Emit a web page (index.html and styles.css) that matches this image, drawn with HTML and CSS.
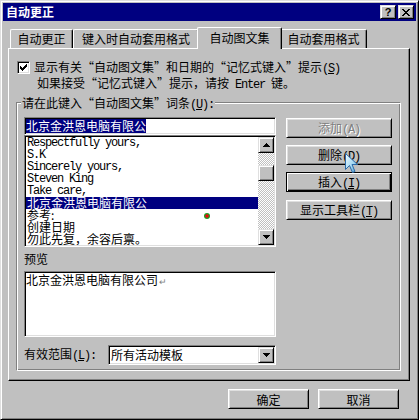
FILE: index.html
```html
<!doctype html>
<html lang="zh-CN">
<head>
  <meta charset="UTF-8">
  <title>自动更正</title>
  <link rel="stylesheet" href="styles.css">
</head>
<body>
  <div class="window">

    <div class="titlebar">
      <span class="title">自动更正</span>
      <div class="title-buttons">
        <span class="tbtn">?</span>
        <span class="tbtn">
          <svg width="8" height="7" viewBox="0 0 8 7"><path d="M0 0h2v1h-2zM6 0h2v1h-2zM1 1h2v1h-2zM5 1h2v1h-2zM2 2h4v1h-4zM3 3h2v1h-2zM2 4h4v1h-4zM1 5h2v1h-2zM5 5h2v1h-2zM0 6h2v1h-2zM6 6h2v1h-2z"/></svg>
        </span>
      </div>
    </div>

    <div class="tabs">
      <div class="tab tab-correct">自动更正</div>
      <div class="tab tab-typing">键入时自动套用格式</div>
      <div class="tab tab-text active">自动图文集</div>
      <div class="tab tab-format">自动套用格式</div>
    </div>

    <div class="panel">
      <div class="option">
        <span class="checkbox">
          <svg width="7" height="7" viewBox="0 0 7 7"><path d="M6 0h1v1h-1zM5 1h2v1h-2zM0 2h1v1h-1zM4 2h3v1h-3zM0 3h2v1h-2zM3 3h3v1h-3zM0 4h5v1h-5zM1 5h3v1h-3zM2 6h1v1h-1z"/></svg>
        </span>
        <div class="option-text">
          <div>显示有关“自动图文集”和日期的“记忆式键入”提示<span class="en">(<u>S</u>)</span></div>
          <div class="hint">如果接受“记忆式键入”提示，请按<span class="en"> Enter </span>键。</div>
        </div>
      </div>

      <div class="group">
        <div class="group-label">请在此键入“自动图文集”词条<span class="en">(<u>U</u>):</span></div>
        <div class="group-body">

          <div class="entry-col">
            <div class="field textbox"><span class="sel">北京金洪恩电脑有限公</span></div>

            <div class="field listbox">
              <ul class="items">
                <li class="en">Respectfully yours,</li>
                <li class="en">S.K</li>
                <li class="en">Sincerely yours,</li>
                <li class="en">Steven King</li>
                <li class="en">Take care,</li>
                <li class="selected">北京金洪恩电脑有限公</li>
                <li>参考:<span class="dot"></span></li>
                <li>创建日期</li>
                <li>勿此先复，余容后禀。</li>
              </ul>
              <div class="scrollbar">
                <span class="raised sb-btn">
                  <svg width="7" height="4" viewBox="0 0 7 4"><path d="M3 0h1v1h-1zM2 1h3v1h-3zM1 2h5v1h-5zM0 3h7v1h-7z"/></svg>
                </span>
                <span class="track track-top"></span>
                <span class="raised sb-thumb"></span>
                <span class="track track-rest"></span>
                <span class="raised sb-btn">
                  <svg width="7" height="4" viewBox="0 0 7 4"><path d="M0 0h7v1h-7zM1 1h5v1h-5zM2 2h3v1h-3zM3 3h1v1h-1z"/></svg>
                </span>
              </div>
            </div>

            <div class="label">预览</div>
            <div class="field preview">北京金洪恩电脑有限公司<span class="para">↵</span></div>

            <div class="scope">
              <span>有效范围<span class="en">(<u>L</u>):</span></span>
              <div class="field combo">
                <span class="combo-text">所有活动模板</span>
                <span class="raised sb-btn">
                  <svg width="7" height="4" viewBox="0 0 7 4"><path d="M0 0h7v1h-7zM1 1h5v1h-5zM2 2h3v1h-3zM3 3h1v1h-1z"/></svg>
                </span>
              </div>
            </div>
          </div>

          <div class="actions">
            <button class="btn" disabled>添加<span class="en">(A)</span></button>
            <button class="btn">删除<span class="en">(<u>D</u>)</span></button>
            <button class="btn default">插入<span class="en">(<u>I</u>)</span></button>
            <button class="btn">显示工具栏<span class="en">(<u>T</u>)</span></button>

            <svg class="cursor" width="14" height="21" viewBox="0 0 14 21">
              <defs>
                <linearGradient id="cur" x1="0" y1="0" x2="1" y2="1">
                  <stop offset="0" stop-color="#f4fcff"/>
                  <stop offset="0.6" stop-color="#9fd6f2"/>
                  <stop offset="1" stop-color="#3d8fc9"/>
                </linearGradient>
              </defs>
              <path d="M0.5 0.5V16.5L4.5 12.5L7.5 19.5L10 18.5L7 11.5H12.5Z" fill="url(#cur)" stroke="#2b6aa8" stroke-width="1"/>
            </svg>
          </div>

        </div>
      </div>
    </div>

    <div class="footer">
      <button class="btn btn-wide">确定</button>
      <button class="btn btn-wide">取消</button>
    </div>

  </div>
</body>
</html>
```

FILE: styles.css
```css
* {
  box-sizing: border-box;
}

body {
  margin: 0;
  background: #c0c0c0;
  font-family: "Noto Sans CJK SC", sans-serif;
  font-size: 12px;
  line-height: 14px;
  color: #000;
}

/* half-width latin, close to the dialog font */
.en {
  font-family: "Liberation Mono", monospace;
  font-size: 12px;
  letter-spacing: -1.2px;
}

u {
  text-decoration: underline;
}

/* Window frame */
.window {
  width: 419px;
  height: 420px;
  border: 1px solid;
  border-color: #dfdfdf #000 #000 #dfdfdf;
  box-shadow: inset 1px 1px 0 #fff, inset -1px -1px 0 #808080;
  padding: 2px;
}

/* Title bar */
.titlebar {
  height: 18px;
  background: #000080;
  display: flex;
  align-items: center;
  justify-content: space-between;
  padding: 0 2px 0 3px;
}

.title {
  color: #fff;
  font-weight: bold;
}

.title-buttons {
  display: flex;
  gap: 2px;
}

.tbtn,
.raised {
  border: 1px solid;
  border-color: #dfdfdf #000 #000 #dfdfdf;
  box-shadow: inset 1px 1px 0 #fff, inset -1px -1px 0 #808080;
  background: #c0c0c0;
}

.tbtn {
  width: 16px;
  height: 14px;
  display: flex;
  align-items: center;
  justify-content: center;
  font: bold 11px "Liberation Sans", sans-serif;
}

/* Tabs */
.tabs {
  display: flex;
  align-items: flex-end;
  height: 21px;
  margin: 6px 0 0 7px;
}

.tab {
  height: 19px;
  border: 1px solid;
  border-bottom: none;
  border-color: #fff #000 #000 #fff;
  border-radius: 2px 2px 0 0;
  box-shadow: inset -1px 0 0 #808080;
  text-align: center;
  line-height: 18px;
  background: #c0c0c0;
}

.tab-correct { width: 63px; }
.tab-typing { width: 126px; }
.tab-text { width: 81px; }
.tab-format { width: 87px; }

.tab.active {
  position: relative;
  z-index: 1;
  width: 85px;
  height: 22px;
  margin: 0 -2px -1px;
  line-height: 19px;
}

/* Tab page */
.panel {
  width: 402px;
  height: 333px;
  margin-left: 5px;
  border: 1px solid;
  border-color: #fff #000 #000 #fff;
  box-shadow: inset -1px -1px 0 #808080;
  padding: 11px 0 0 7px;
}

.option {
  display: flex;
  margin-left: 1px;
}

.checkbox {
  width: 13px;
  height: 13px;
  margin: 1px 4px 0 0;
  background: #fff;
  border: 1px solid;
  border-color: #808080 #fff #fff #808080;
  box-shadow: inset 1px 1px 0 #000, inset -1px -1px 0 #dfdfdf;
  display: flex;
  align-items: center;
  justify-content: center;
}

.hint {
  padding-left: 3px;
}

/* Group box */
.group {
  width: 385px;
  height: 269px;
  margin-top: 10px;
  border: 1px solid;
  border-color: #808080 #fff #fff #808080;
  box-shadow: inset 1px 1px 0 #fff, inset -1px -1px 0 #808080;
}

.group-label {
  width: max-content;
  margin: -7px 0 0 4px;
  padding: 0 1px;
  background: #c0c0c0;
}

.group-body {
  display: flex;
  margin-top: 5px;
  padding-left: 7px;
}

.entry-col {
  width: 252px;
}

.field {
  background: #fff;
  border: 1px solid;
  border-color: #808080 #fff #fff #808080;
  box-shadow: inset 1px 1px 0 #000, inset -1px -1px 0 #dfdfdf;
  padding: 1px;
}

.textbox {
  height: 18px;
  line-height: 14px;
}

.sel {
  display: inline-block;
  background: #000080;
  color: #fff;
}

/* List */
.listbox {
  height: 112px;
  display: flex;
}

.items {
  list-style: none;
  margin: 0;
  padding: 0;
  flex: 1;
  overflow: hidden;
}

.items li {
  position: relative;
  height: 12px;
  line-height: 12px;
  padding-left: 1px;
  white-space: nowrap;
}

.items li.selected {
  background: #000080;
  color: #fff;
}

.dot {
  position: absolute;
  left: 178px;
  top: 4px;
  width: 6px;
  height: 6px;
  border-radius: 50%;
  background: radial-gradient(#e01010 0 35%, #1f9a1f 45% 100%);
}

.scrollbar {
  width: 16px;
  display: flex;
  flex-direction: column;
}

.sb-btn {
  width: 16px;
  height: 16px;
  display: flex;
  align-items: center;
  justify-content: center;
  flex: none;
}

.track {
  background: repeating-conic-gradient(#fff 0 25%, #c0c0c0 0 50%) 0 0 / 2px 2px;
}

.track-top {
  height: 12px;
}

.track-rest {
  flex: 1;
}

.sb-thumb {
  height: 16px;
}

.label {
  margin-top: 5px;
}

.preview {
  height: 66px;
  margin-top: 5px;
}

.para {
  color: #808080;
  font-size: 9px;
  margin-left: 1px;
}

.scope {
  display: flex;
  align-items: center;
  justify-content: space-between;
  height: 20px;
  margin-top: 8px;
}

.combo {
  width: 168px;
  height: 20px;
  display: flex;
  align-items: center;
  justify-content: space-between;
}

.combo-text {
  padding-left: 1px;
}

/* Buttons */
.actions {
  position: relative;
  width: 106px;
  margin: 1px 0 0 10px;
  display: flex;
  flex-direction: column;
  gap: 7px;
}

.btn {
  height: 20px;
  padding: 0;
  font: inherit;
  line-height: 17px;
  color: #000;
  background: #c0c0c0;
  border: 1px solid;
  border-color: #fff #000 #000 #fff;
  box-shadow: inset 1px 1px 0 #dfdfdf, inset -1px -1px 0 #808080;
}

.btn:disabled {
  color: #808080;
  text-shadow: 1px 1px 0 #fff;
}

.btn.default {
  border-color: #000;
  box-shadow: inset 1px 1px 0 #fff, inset -1px -1px 0 #000, inset -2px -2px 0 #808080;
}

.actions .btn:last-of-type {
  margin-top: 1px;
}

.cursor {
  position: absolute;
  left: 59px;
  top: 35px;
}

.footer {
  display: flex;
  gap: 9px;
  margin: 8px 0 0 225px;
}

.btn-wide {
  width: 81px;
}
```
